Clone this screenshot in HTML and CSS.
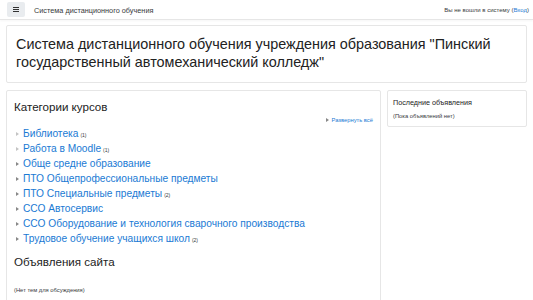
FILE: index.html
```html
<!DOCTYPE html>
<html lang="ru">
<head>
<meta charset="utf-8">
<title>Система дистанционного обучения</title>
<link rel="stylesheet" href="styles.css">
</head>
<body>
<header class="navbar">
  <button class="menu-btn" aria-label="Меню">
    <svg width="6" height="5" viewBox="0 0 6 5"><rect x="0" y="0" width="6" height="1" fill="#333"/><rect x="0" y="2" width="6" height="1" fill="#333"/><rect x="0" y="4" width="6" height="1" fill="#333"/></svg>
  </button>
  <span class="brand">Система дистанционного обучения</span>
  <span class="login">Вы не вошли в систему (<a href="#">Вход</a>)</span>
</header>
<div class="page">
  <div class="card header-card">
    <h1>Система дистанционного обучения учреждения образования "Пинский государственный автомеханический колледж"</h1>
  </div>
  <div class="columns">
    <main class="card main-card">
      <h2>Категории курсов</h2>
      <div class="expand-row"><a href="#"><span class="tri dark"></span>Развернуть всё</a></div>
      <ul class="cats">
        <li><span class="tri light"></span><a href="#">Библиотека</a><span class="count">(1)</span></li>
        <li><span class="tri light"></span><a href="#">Работа в Moodle</a><span class="count">(1)</span></li>
        <li><span class="tri dark"></span><a href="#">Обще средне образование</a></li>
        <li><span class="tri dark"></span><a href="#">ПТО Общепрофессиональные предметы</a></li>
        <li><span class="tri dark"></span><a href="#">ПТО Специальные предметы</a><span class="count">(2)</span></li>
        <li><span class="tri dark"></span><a href="#">ССО Автосервис</a></li>
        <li><span class="tri dark"></span><a href="#">ССО Оборудование и технология сварочного производства</a></li>
        <li><span class="tri dark"></span><a href="#">Трудовое обучение учащихся школ</a><span class="count">(2)</span></li>
      </ul>
      <h2 class="news-title">Объявления сайта</h2>
      <p class="empty">(Нет тем для обсуждения)</p>
    </main>
    <aside class="card side-card">
      <h3>Последние объявления</h3>
      <p class="side-empty">(Пока объявлений нет)</p>
    </aside>
  </div>
</div>
</body>
</html>
```
FILE: styles.css
```css
* { box-sizing: border-box; }
html, body { margin: 0; padding: 0; }
body {
  background: #fff;
  font-family: "Liberation Sans", Arial, sans-serif;
  color: #373a3c;
}
a { color: #1a7ad4; text-decoration: none; }

.navbar {
  height: 20px;
  display: flex;
  align-items: center;
  padding: 0 4px 0 7px;
  border-bottom: 1px solid #e6e6e6;
  box-shadow: 0 1px 2px rgba(0,0,0,0.04);
}
.menu-btn {
  width: 18px;
  height: 15px;
  border: 0;
  border-radius: 2px;
  background: #e9ecef;
  padding: 0;
  display: flex;
  align-items: center;
  justify-content: center;
  margin-top: -1px;
}
.menu-btn svg { display: block; }
.brand {
  margin-left: 9px;
  font-size: 7.3px;
  color: #373a3c;
  margin-top: 1px;
}
.login {
  margin-left: auto;
  font-size: 6px;
  color: #373a3c;
}

.page { padding: 5px 6px 0 6px; }
.card {
  background: #fff;
  border: 1px solid #e6e6e6;
  border-radius: 2px;
}
.header-card { padding: 9px 9px 11px 9px; }
.header-card h1 {
  margin: 0;
  font-size: 14.4px;
  line-height: 18px;
  font-weight: normal;
  color: #222;
}

.columns {
  display: flex;
  align-items: flex-start;
  gap: 6px;
  margin-top: 7px;
}
.main-card {
  width: 375px;
  min-height: 230px;
  padding: 8px 7px 12px 7px;
}
.main-card h2 {
  margin: 0;
  font-size: 11.6px;
  line-height: 15px;
  font-weight: normal;
  color: #222;
}
.expand-row {
  display: flex;
  justify-content: flex-end;
  font-size: 5.8px;
  line-height: 8px;
  margin-top: 2px;
}
.expand-row a { display: flex; align-items: center; }
.expand-row .tri { margin-right: 3px; }
.cats {
  list-style: none;
  margin: 2px 0 0 0;
  padding: 0 0 0 2px;
}
.cats li {
  display: flex;
  align-items: center;
  height: 15px;
  font-size: 10.2px;
}
.cats .tri { margin-right: 4px; }
.count {
  font-size: 5px;
  color: #373a3c;
  margin-left: 2px;
  margin-top: 3px;
}
.tri {
  display: inline-block;
  width: 0;
  height: 0;
  border-top: 2.5px solid transparent;
  border-bottom: 2.5px solid transparent;
  border-left: 3px solid #888;
}
.tri.light { border-left-color: #c4c4c4; }
.tri.dark { border-left-color: #888; }

.news-title { margin-top: 8px !important; }
.empty {
  margin: 17px 0 0 0;
  font-size: 5.8px;
  line-height: 8px;
}

.side-card {
  flex: 1;
  height: 37px;
  padding: 7px 5px 0 5px;
}
.side-card h3 {
  margin: 0;
  font-size: 7.2px;
  line-height: 10px;
  font-weight: normal;
  color: #222;
}
.side-empty {
  margin: 4px 0 0 0;
  font-size: 5.8px;
  line-height: 8px;
}
```
